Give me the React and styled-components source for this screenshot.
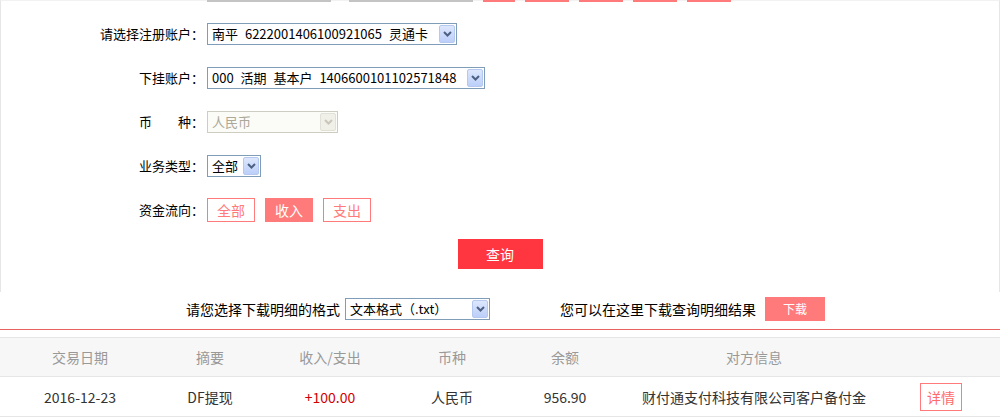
import React from "react";
import styled, { createGlobalStyle } from "styled-components";

const FONT = `"Noto Sans CJK SC", "Liberation Sans", sans-serif`;

const GlobalStyle = createGlobalStyle`
  body {
    margin: 0;
    background: #fff;
    color: #000;
    font-family: ${FONT};
  }
`;

const Chevron = ({ color }) => (
  <svg width="9" height="6" viewBox="0 0 9 6">
    <path d="M1 1 L4.5 4.5 L8 1" fill="none" stroke={color} strokeWidth="2" />
  </svg>
);

const Select = ({ width, disabled, children }) => (
  <SelectBox $w={width} $disabled={disabled}>
    <SelectText>{children}</SelectText>
    <ArrowBtn $disabled={disabled}>
      <Chevron color={disabled ? "#c9c7ba" : "#4d6185"} />
    </ArrowBtn>
  </SelectBox>
);

const App = () => {
  return (
    <>
      <GlobalStyle />
      <Page>
        <FormPanel>
          {/* 日期区段，只露出底边 */}
          <TopRow>
            <DateInput />
            <Dash />
            <DateInput />
            <QuickBtn $w={32} $active />
            <QuickBtn $w={44} />
            <QuickBtn $w={44} />
            <QuickBtn $w={44} />
            <QuickBtn $w={44} />
          </TopRow>

          <FormRow>
            <Label>请选择注册账户：</Label>
            <Select width={250}>南平 6222001406100921065 灵通卡</Select>
          </FormRow>
          <FormRow>
            <Label>下挂账户：</Label>
            <Select width={278}>000 活期 基本户 1406600101102571848</Select>
          </FormRow>
          <FormRow>
            <Label>币{"\u3000\u3000"}种：</Label>
            <Select width={131} disabled>
              人民币
            </Select>
          </FormRow>
          <FormRow>
            <Label>业务类型：</Label>
            <Select width={54}>全部</Select>
          </FormRow>
          <FormRow>
            <Label>资金流向：</Label>
            <FlowGroup>
              <FlowBtn>全部</FlowBtn>
              <FlowBtn $active>收入</FlowBtn>
              <FlowBtn>支出</FlowBtn>
            </FlowGroup>
          </FormRow>

          <QueryButton>查询</QueryButton>
        </FormPanel>

        <DownloadBar>
          <BarText>请您选择下载明细的格式</BarText>
          <Select width={145}>文本格式（.txt）</Select>
          <BarText $gap={70}>您可以在这里下载查询明细结果</BarText>
          <DownloadBtn>下载</DownloadBtn>
        </DownloadBar>

        <Table>
          <colgroup>
            <col style={{ width: 160 }} />
            <col style={{ width: 100 }} />
            <col style={{ width: 140 }} />
            <col style={{ width: 104 }} />
            <col style={{ width: 122 }} />
            <col style={{ width: 256 }} />
            <col style={{ width: 118 }} />
          </colgroup>
          <thead>
            <tr>
              <Th>交易日期</Th>
              <Th>摘要</Th>
              <Th>收入/支出</Th>
              <Th>币种</Th>
              <Th>余额</Th>
              <Th>对方信息</Th>
              <Th></Th>
            </tr>
          </thead>
          <tbody>
            <tr>
              <Td>2016-12-23</Td>
              <Td>DF提现</Td>
              <Td $red>+100.00</Td>
              <Td>人民币</Td>
              <Td>956.90</Td>
              <Td>财付通支付科技有限公司客户备付金</Td>
              <Td>
                <DetailBtn>详情</DetailBtn>
              </Td>
            </tr>
          </tbody>
        </Table>
      </Page>
    </>
  );
};

export default App;

const Page = styled.div`
  width: 1000px;
  overflow: hidden;
`;

const FormPanel = styled.div`
  display: flex;
  flex-direction: column;
  height: 292px;
  box-sizing: border-box;
  border-top: 1px solid #f2f2f2;
  border-left: 1px solid #e6e6e6;
  border-right: 1px solid #e6e6e6;
`;

const TopRow = styled.div`
  display: flex;
  align-items: flex-end;
  height: 22px;
  margin: -21px 0 10px 206px;
`;

const DateInput = styled.div`
  width: 124px;
  height: 22px;
  box-sizing: border-box;
  border: 1px solid #c4c4c4;
  border-bottom-width: 2px;
`;

const Dash = styled.span`
  width: 18px;
`;

const QuickBtn = styled.div`
  width: ${(p) => p.$w}px;
  height: 22px;
  margin-left: 10px;
  box-sizing: border-box;
  border: 1px solid #ff7b7b;
  border-bottom-width: 2px;
  background: ${(p) => (p.$active ? "#ff7b7b" : "#fff")};
`;

const FormRow = styled.div`
  display: grid;
  grid-template-columns: 203px auto;
  column-gap: 3px;
  justify-content: start;
  align-items: center;
  height: 44px;
`;

const Label = styled.label`
  text-align: right;
  font-size: 13px;
  line-height: 16px;
  white-space: pre;
`;

const SelectBox = styled.div`
  display: flex;
  align-items: center;
  width: ${(p) => p.$w}px;
  height: 22px;
  box-sizing: border-box;
  padding: 1px;
  border: 1px solid ${(p) => (p.$disabled ? "#cfcdc2" : "#7f9db9")};
  background: ${(p) => (p.$disabled ? "#fbfbf7" : "#fff")};
  color: ${(p) => (p.$disabled ? "#aca899" : "#000")};
  font-size: 13px;
`;

const SelectText = styled.span`
  flex: 1;
  padding-left: 3px;
  line-height: 18px;
  word-spacing: 4px;
  white-space: nowrap;
  overflow: hidden;
`;

const ArrowBtn = styled.span`
  display: flex;
  align-items: center;
  justify-content: center;
  width: 16px;
  height: 18px;
  box-sizing: border-box;
  border: 1px solid ${(p) => (p.$disabled ? "#e2e1d8" : "#b5c8f0")};
  border-radius: 2px;
  background: ${(p) =>
    p.$disabled
      ? "#f0efe8"
      : "linear-gradient(#dde7fd, #bccff9)"};
`;

const FlowGroup = styled.div`
  display: flex;
  gap: 10px;
`;

const FlowBtn = styled.span`
  width: 48px;
  height: 24px;
  box-sizing: border-box;
  border: 1px solid #ff7b7b;
  background: ${(p) => (p.$active ? "#ff7b7b" : "#fff")};
  color: ${(p) => (p.$active ? "#fff" : "#ff7b7b")};
  font-size: 14px;
  line-height: 22px;
  text-align: center;
`;

const QueryButton = styled.button`
  align-self: center;
  width: 85px;
  height: 30px;
  margin-top: 7px;
  padding: 0;
  border: 0;
  background: #ff353f;
  color: #fff;
  font-family: ${FONT};
  font-size: 14px;
  line-height: 30px;
`;

const DownloadBar = styled.div`
  display: flex;
  align-items: center;
  height: 38px;
  box-sizing: border-box;
  padding: 0 0 4px 186px;
  border-bottom: 1px solid #e96262;
  font-size: 14px;
`;

const BarText = styled.span`
  margin-left: ${(p) => p.$gap || 0}px;
  margin-right: ${(p) => (p.$gap ? 9 : 5)}px;
  line-height: 18px;
  white-space: nowrap;
`;

const DownloadBtn = styled.span`
  width: 60px;
  height: 24px;
  background: #ff7b7b;
  color: #fff;
  font-size: 12px;
  line-height: 24px;
  text-align: center;
`;

const Table = styled.table`
  width: 1000px;
  margin-top: 7px;
  border-collapse: collapse;
  table-layout: fixed;
`;

const Th = styled.th`
  height: 38px;
  padding: 0;
  border-top: 1px solid #e6e6e6;
  border-bottom: 1px solid #e6e6e6;
  background: #f7f7f7;
  color: #999;
  font-size: 14px;
  font-weight: normal;
  text-align: center;
`;

const Td = styled.td`
  height: 39px;
  padding: 0;
  border-bottom: 1px solid #e6e6e6;
  color: ${(p) => (p.$red ? "#d40000" : "#333")};
  font-size: 14px;
  text-align: center;
  white-space: nowrap;
`;

const DetailBtn = styled.span`
  display: inline-block;
  width: 42px;
  height: 28px;
  box-sizing: border-box;
  border: 1px solid #ff7b7b;
  color: #ff6b6b;
  font-size: 14px;
  line-height: 26px;
  vertical-align: middle;
`;
